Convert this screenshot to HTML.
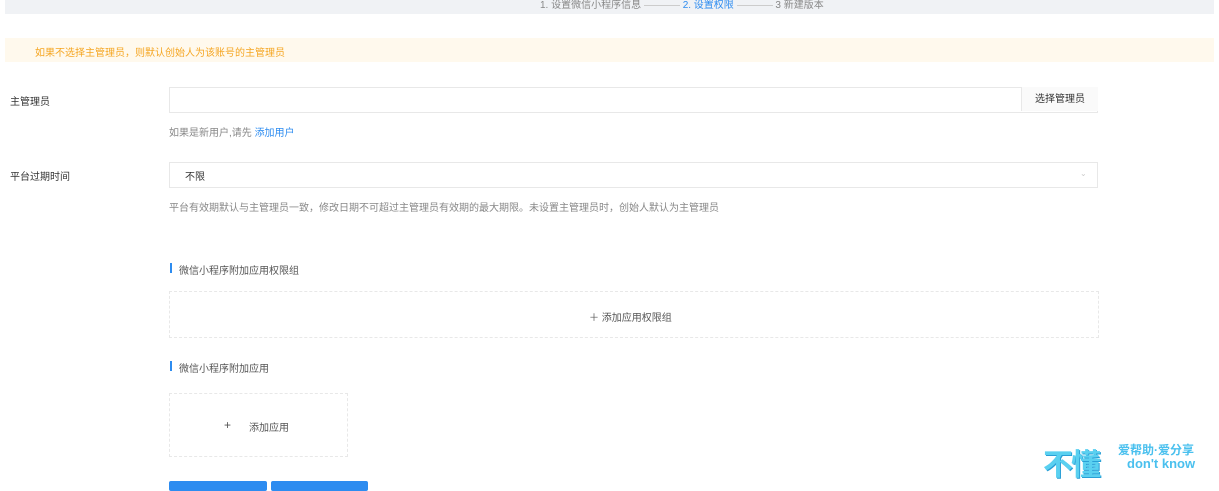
<!DOCTYPE html>
<html><head><meta charset="utf-8"><style>
body{margin:0;width:1219px;height:487px;overflow:hidden;background:#fff;font-family:"Liberation Sans","Noto Sans CJK SC",sans-serif;font-size:10px;color:#333;position:relative}
.a{position:absolute}
</style></head><body>
<div class="a" style="left:5px;top:0;width:1209px;height:14px;background:#f0f2f5"></div>
<div class="a" style="left:540px;top:-4px;font-size:10px;color:#888;white-space:nowrap">1. 设置微信小程序信息 <span style="display:inline-block;width:36px;border-top:1px solid #ccc;vertical-align:middle"></span> <span style="color:#2d8cf0">2. 设置权限</span> <span style="display:inline-block;width:36px;border-top:1px solid #ccc;vertical-align:middle"></span> 3 新建版本</div>
<div class="a" style="left:5px;top:38px;width:1209px;height:24px;background:#fff9ed"></div>
<div class="a" style="left:35px;top:44px;color:#f5a623">如果不选择主管理员，则默认创始人为该账号的主管理员</div>
<div class="a" style="left:10px;top:93px">主管理员</div>
<div class="a" style="left:169px;top:87px;width:927px;height:24px;border:1px solid #e8e8e8"></div>
<div class="a" style="left:1021px;top:87px;width:76px;height:24px;border-left:1px solid #e8e8e8;background:#fafafa;text-align:center;line-height:26px">选择管理员</div>
<div class="a" style="left:169px;top:124px;color:#888">如果是新用户,请先 <span style="color:#2d8cf0">添加用户</span></div>
<div class="a" style="left:10px;top:168px">平台过期时间</div>
<div class="a" style="left:169px;top:162px;width:927px;height:24px;border:1px solid #e8e8e8"></div>
<div class="a" style="left:185px;top:168px">不限</div>
<div class="a" style="left:1080px;top:169px;color:#ccc;font-size:8px">⌄</div>
<div class="a" style="left:169px;top:199px;color:#888">平台有效期默认与主管理员一致，修改日期不可超过主管理员有效期的最大期限。未设置主管理员时，创始人默认为主管理员</div>
<div class="a" style="left:170px;top:263px;width:2px;height:10px;background:#2d8cf0"></div>
<div class="a" style="left:179px;top:262px;color:#555">微信小程序附加应用权限组</div>
<div class="a" style="left:169px;top:291px;width:928px;height:45px;border:1px dashed #e8e8e8"></div>
<div class="a" style="left:589px;top:309px;color:#555">＋ 添加应用权限组</div>
<div class="a" style="left:170px;top:361px;width:2px;height:10px;background:#2d8cf0"></div>
<div class="a" style="left:179px;top:360px;color:#555">微信小程序附加应用</div>
<div class="a" style="left:169px;top:393px;width:177px;height:62px;border:1px dashed #e8e8e8"></div>
<div class="a" style="left:224px;top:418px;color:#555;font-size:12px">+</div>
<div class="a" style="left:249px;top:419px;color:#555">添加应用</div>
<div class="a" style="left:169px;top:481px;width:98px;height:10px;background:#2d8cf0;border-radius:2px"></div>
<div class="a" style="left:271px;top:481px;width:97px;height:10px;background:#2d8cf0;border-radius:2px"></div>
<div class="a" style="left:1043px;top:440px;font-size:30px;font-weight:bold;color:#5ad0f0;letter-spacing:-2px;text-shadow:1px 1px 0 #2a9fd6">不懂</div>
<div class="a" style="left:1118px;top:441px;font-size:12px;font-weight:bold;color:#4ac0ee">爱帮助·爱分享</div>
<div class="a" style="left:1127px;top:456px;font-size:13px;font-weight:bold;color:#4ac0ee">don't know</div>
</body></html>
